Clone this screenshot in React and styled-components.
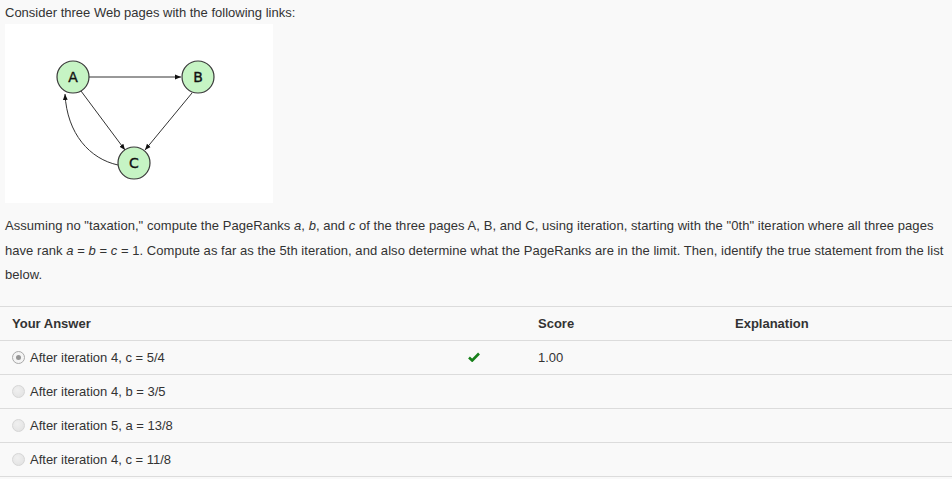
import React from "react";
import styled, { createGlobalStyle } from "styled-components";

const GlobalStyle = createGlobalStyle`
  body {
    margin: 0;
    background: #f9f9f9;
    font-family: "Liberation Sans", Arial, sans-serif;
    color: #333;
  }
`;

const Page = styled.div`
  display: flex;
  flex-direction: column;
  width: 952px;
`;

const Prompt = styled.p`
  margin: 0;
  padding: 4px 5px 0;
  font-size: 13px;
  line-height: 17px;
`;

const Figure = styled.div`
  margin: 3px 0 0 5px;
  width: 268px;
  height: 179px;
  background: #fff;
`;

const Question = styled.p`
  margin: 11px 0 0;
  padding: 0 5px;
  width: 944px;
  font-size: 13px;
  line-height: 24.5px;
  letter-spacing: 0.05px;

  em {
    font-style: italic;
  }
`;

const Table = styled.div`
  margin-top: 18px;
  border-top: 1px solid #dcdcdc;
`;

const Row = styled.div`
  display: grid;
  grid-template-columns: 450px 76px 197px 1fr;
  align-items: center;
  height: 33px;
  padding-left: 12px;
  border-bottom: 1px solid #dcdcdc;
  font-size: 13px;
  font-weight: ${(p) => (p.$head ? 700 : 400)};
`;

const Answer = styled.label`
  display: flex;
  align-items: center;
  gap: 5px;
`;

const Radio = styled.span`
  position: relative;
  width: 11px;
  height: 11px;
  border-radius: 50%;
  border: 1px solid ${(p) => (p.$checked ? "#a9a9a9" : "#d6d6d6")};
  background: ${(p) =>
    p.$checked ? "#f4f4f4" : "radial-gradient(circle at 40% 35%, #f0f0f0, #e0e0e0)"};

  &::after {
    content: "";
    display: ${(p) => (p.$checked ? "block" : "none")};
    position: absolute;
    left: 3px;
    top: 3px;
    width: 5px;
    height: 5px;
    border-radius: 50%;
    background: #959595;
  }
`;

const CheckCell = styled.span`
  display: flex;
  padding-left: 6px;
`;

const Graph = () => (
  <svg width="268" height="179" viewBox="0 0 268 179">
    <defs>
      <marker id="arr" viewBox="0 0 10 10" refX="10" refY="5" markerWidth="6" markerHeight="6" orient="auto">
        <path d="M0 1 L10 5 L0 9 z" fill="#111" />
      </marker>
    </defs>
    <g stroke="#333" strokeWidth="1" fill="none">
      <line x1="84" y1="53" x2="176" y2="53" markerEnd="url(#arr)" />
      <line x1="76" y1="67" x2="120" y2="126" markerEnd="url(#arr)" />
      <line x1="187" y1="69" x2="140" y2="126" markerEnd="url(#arr)" />
      <path d="M113 141 C85 135 62 110 60 70" markerEnd="url(#arr)" />
    </g>
    <g fill="#c6f4c4" stroke="#3a3a3a" strokeWidth="1.2">
      <circle cx="68" cy="53" r="16" />
      <circle cx="193" cy="53" r="16" />
      <circle cx="129" cy="139" r="16" />
    </g>
    <g
      fontFamily="'DejaVu Sans', sans-serif"
      fontSize="14"
      fill="#111"
      stroke="#111"
      strokeWidth="0.35"
      textAnchor="middle"
    >
      <text x="68" y="58">A</text>
      <text x="193" y="58">B</text>
      <text x="129" y="144">C</text>
    </g>
  </svg>
);

const Check = () => (
  <svg width="12" height="10" viewBox="0 0 12 10">
    <path d="M1 5.5 L4.2 8.5 L11 1.5" stroke="#17801a" strokeWidth="2.6" fill="none" />
  </svg>
);

const answers = [
  { text: "After iteration 4, c = 5/4", checked: true, score: "1.00" },
  { text: "After iteration 4, b = 3/5" },
  { text: "After iteration 5, a = 13/8" },
  { text: "After iteration 4, c = 11/8" },
];

export default function App() {
  return (
    <Page>
      <GlobalStyle />
      <Prompt>Consider three Web pages with the following links:</Prompt>
      <Figure>
        <Graph />
      </Figure>
      <Question>
        Assuming no "taxation," compute the PageRanks <em>a</em>, <em>b</em>, and <em>c</em> of the three
        pages A, B, and C, using iteration, starting with the "0th" iteration where all three pages have rank{" "}
        <em>a</em> = <em>b</em> = <em>c</em> = 1. Compute as far as the 5th iteration, and also determine what
        the PageRanks are in the limit. Then, identify the true statement from the list below.
      </Question>
      <Table>
        <Row $head>
          <span>Your Answer</span>
          <span />
          <span>Score</span>
          <span>Explanation</span>
        </Row>
        {answers.map((a) => (
          <Row key={a.text}>
            <Answer>
              <Radio $checked={a.checked} />
              {a.text}
            </Answer>
            <CheckCell>{a.checked && <Check />}</CheckCell>
            <span>{a.score}</span>
            <span />
          </Row>
        ))}
      </Table>
    </Page>
  );
}
